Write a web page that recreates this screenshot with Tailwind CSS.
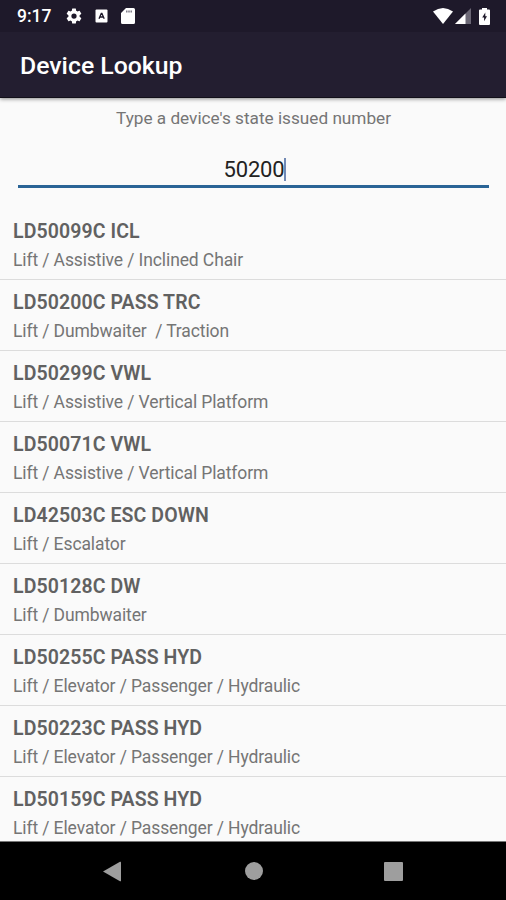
<!DOCTYPE html>
<html lang="en">
<head>
<meta charset="utf-8">
<title>Device Lookup</title>
<script src="https://cdn.jsdelivr.net/npm/@tailwindcss/browser@4"></script>
</head>
<body class="w-[506px] h-[900px] overflow-hidden bg-[#fafafa] font-[Roboto,sans-serif] flex flex-col">
<header class="h-[98px] shrink-0 bg-[#231e30] text-white shadow-[0_1px_4px_rgba(0,0,0,0.45)] border-b border-[#121019]">
  <div class="h-8 flex items-center pl-[17px] pr-[16px] bg-[#1e192a]">
    <span class="text-[17.5px] leading-8 font-medium w-[48px]">9:17</span>
    <svg class="w-[18px] h-[18px]" viewBox="0 0 24 24" fill="currentColor"><path d="M19.43 12.98c.04-.32.07-.64.07-.98s-.03-.66-.07-.98l2.11-1.65a.5.5 0 0 0 .12-.64l-2-3.46a.5.5 0 0 0-.61-.22l-2.49 1a7.3 7.3 0 0 0-1.69-.98l-.38-2.65A.49.49 0 0 0 14 2h-4a.49.49 0 0 0-.49.42l-.38 2.65c-.61.25-1.17.59-1.69.98l-2.49-1a.5.5 0 0 0-.61.22l-2 3.46a.5.5 0 0 0 .12.64l2.11 1.65a8 8 0 0 0 0 1.96l-2.11 1.65a.5.5 0 0 0-.12.64l2 3.46c.12.22.39.3.61.22l2.49-1c.52.4 1.08.73 1.69.98l.38 2.65c.03.24.24.42.49.42h4c.25 0 .46-.18.49-.42l.38-2.65c.61-.25 1.17-.59 1.69-.98l2.49 1c.23.09.49 0 .61-.22l2-3.46a.5.5 0 0 0-.12-.64zM12 15.5a3.5 3.5 0 1 1 0-7 3.5 3.5 0 0 1 0 7z"/></svg>
    <svg class="w-[13px] h-[14px] ml-[12px]" viewBox="0 0 13 14"><rect x=".5" y=".5" width="12" height="13" rx="1" fill="#fff"/><path d="M4 9.800 6.300 4.400h.6L9.200 9.800M4.800 8h3.600" fill="none" stroke="#1e192a" stroke-width="1.3"/></svg>
    <svg class="w-[14px] h-4 ml-[13px]" viewBox="0 0 14 16"><path d="M5 0h7.500A1.500 1.500 0 0 1 14 1.500v13a1.500 1.500 0 0 1-1.500 1.500h-11A1.500 1.500 0 0 1 0 14.500V5z" fill="#fff"/><path d="M5.800 2.500v2M8 2.500v2M10.200 2.500v2" stroke="#6b6775" stroke-width="1.300"/></svg>
    <svg class="w-[20px] h-4 ml-auto" viewBox="0 0 20 16"><path d="M0 3.600Q10-3.600 20 3.600L10 16z" fill="#fff"/></svg>
    <svg class="w-4 h-4 ml-[2px]" viewBox="0 0 16 16"><path d="M0 16 16 0v16z" fill="#6b6775"/><path d="M0 16 10.500 5.500V16z" fill="#fff"/></svg>
    <svg class="w-[11px] h-[17px] ml-[8px]" viewBox="0 0 11 17"><path d="M3 0h5v1.500H10a1 1 0 0 1 1 1V16a1 1 0 0 1-1 1H1a1 1 0 0 1-1-1V2.500a1 1 0 0 1 1-1h2z" fill="#fff"/><path d="M6.300 4.500 3.200 9.500h1.900v3.800L8 8.300H6.300z" fill="#1e192a"/></svg>
  </div>
  <h1 class="pl-5 pt-[18px] text-[24.800px] leading-[32px] font-medium">Device Lookup</h1>
</header>
<main class="h-[744px] shrink-0 overflow-hidden border-b border-[#777]">
  <p class="pt-[9px] text-center text-[17.2px] leading-[22px] text-[#757575] pl-px">Type a device's state issued number</p>
  <div class="ml-[18px] mr-[17px] mt-[25px] h-[34px] border-b-[3px] border-[#2a6496] flex justify-center items-start">
    <span class="text-[22px] leading-[31px] tracking-[-0.2px] text-[#222] pl-[3px]">50200</span><span class="w-[2px] h-[23px] mt-[4px] bg-[#7189b4]"></span>
  </div>
  <ul class="mt-[21px] text-[#616161]" id="list">
  </ul>
</main>
<nav class="flex-1 bg-black flex items-center pl-[103px] text-[#9e9e9e]">
  <svg class="w-[18px] h-[21px]" viewBox="0 0 18 21" fill="currentColor"><path d="M0 10.500 17 .8q1-.5 1 .5v18.400q0 1-1 .5z"/></svg>
  <span class="size-[18px] rounded-full bg-[#9e9e9e] ml-[123.500px]"></span>
  <span class="size-[19px] rounded-[1px] bg-[#9e9e9e] ml-[121.500px]"></span>
</nav>
<script>
const devices = [
  ["LD50099C ICL", "Lift / Assistive / Inclined Chair"],
  ["LD50200C PASS TRC", "Lift / Dumbwaiter  / Traction"],
  ["LD50299C VWL", "Lift / Assistive / Vertical Platform"],
  ["LD50071C VWL", "Lift / Assistive / Vertical Platform"],
  ["LD42503C ESC DOWN", "Lift / Escalator"],
  ["LD50128C DW", "Lift / Dumbwaiter"],
  ["LD50255C PASS HYD", "Lift / Elevator / Passenger / Hydraulic"],
  ["LD50223C PASS HYD", "Lift / Elevator / Passenger / Hydraulic"],
  ["LD50159C PASS HYD", "Lift / Elevator / Passenger / Hydraulic"]
];
document.getElementById("list").innerHTML = devices.map(([name, type]) => `
  <li class="h-[71px] pl-[13px] pt-[9px] border-b border-[#dcdcdc] whitespace-pre flex flex-col items-start"><b class="font-semibold text-[19.5px] leading-[28px] tracking-[0.1px]">${name}</b><span class="text-[17.5px] leading-[28px] tracking-[-0.11px] text-[#757575]">${type}</span></li>`).join("");
</script>
</body>
</html>
